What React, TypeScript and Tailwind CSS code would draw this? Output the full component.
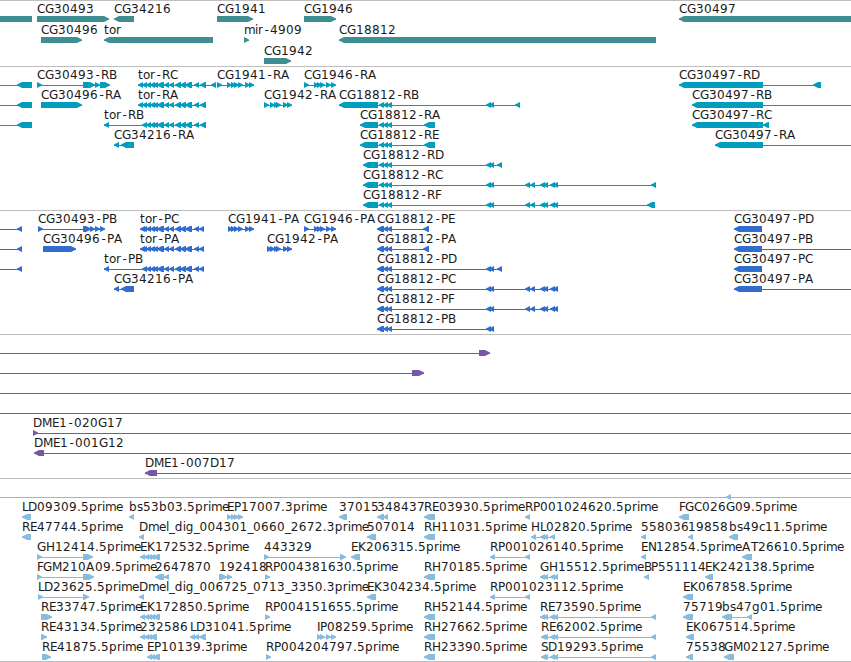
type Dir = "L" | "R" | "N";

interface Feature {
  row: number;
  dir: Dir;
  label?: string;
  exons: number[][];
  // span of the connecting line, when it goes beyond the exons
  from?: number;
  to?: number;
}

interface TrackProps {
  name: string;
  height: number;
  pitch: number;
  color: string;
  features: Feature[];
}

const WIDTH = 851;

const ADVANCE: Record<string, number> = {
  A: 9, B: 7, C: 8, D: 9, E: 7, F: 6, G: 9, H: 9, I: 3, K: 8, L: 6, M: 10, P: 7, R: 8, S: 7, T: 7,
  b: 8, c: 6, d: 8, e: 7, g: 8, i: 3, l: 3, m: 11, o: 7, p: 8, r: 5, s: 6, t: 5,
  "-": 7, ".": 4, _: 5.7,
};

function glyphPositions(text: string, start: number) {
  let x = start;
  return text
    .split("")
    .map((ch) => {
      const current = ch === "-" ? x + 1.5 : x;
      x += ADVANCE[ch] ?? 8;
      return current;
    })
    .join(" ");
}

function f(row: number, dir: Dir, label: string, exons: number[][], to?: number, from?: number): Feature {
  return { row, dir, label, exons, to, from };
}

function exonPoints([a, b]: number[], y: number, dir: Dir) {
  const tip = Math.min(5, b - a);
  if (dir === "L") {
    return `${a},${y + 2.5} ${a + tip},${y} ${b},${y} ${b},${y + 6} ${a + tip},${y + 6} ${a},${y + 3.5}`;
  }
  if (dir === "R") {
    return `${a},${y} ${b - tip},${y} ${b},${y + 2.5} ${b},${y + 3.5} ${b - tip},${y + 6} ${a},${y + 6}`;
  }
  return `${a},${y} ${b},${y} ${b},${y + 6} ${a},${y + 6}`;
}

const torTail = [[146, 151], [150, 155], [153, 158], [157, 164], [164, 169], [169, 174], [175, 181], [180, 186], [185, 192], [194, 199]];
const cg1941 = [[231, 236], [234, 239], [238, 243], [245, 250], [249, 254]];
const cg1946 = [[304, 309], [314, 319], [317, 322], [320, 325], [326, 331], [331, 336]];
const cg1942 = [[270, 275], [274, 279], [276, 281], [283, 288], [287, 292]];
const triple = [[379, 384], [383, 388], [387, 392]];
const tripleCds = [[377, 384], [383, 388], [387, 392]];
const pair = [[486, 491], [489, 494]];
const far = [[525, 530], [530, 535], [540, 545], [543, 548], [550, 555], [553, 558]];
const ek17 = [[140, 145], [144, 149], [147, 152], [150, 155], [153, 160]];
const estPairs = [[543, 548], [550, 555], [553, 558]];

const genes: Feature[] = [
  f(0, "N", "", [[0, 32]]),
  f(0, "R", "CG30493", [[37, 109]]),
  f(0, "L", "CG34216", [[114, 134]]),
  f(0, "R", "CG1941", [[217, 253]]),
  f(0, "R", "CG1946", [[304, 336]]),
  f(0, "L", "CG30497", [[679, 856]]),
  f(1, "R", "CG30496", [[41, 82]]),
  f(1, "L", "tor", [[104, 213]]),
  f(1, "R", "mir-4909", [[244, 249]]),
  f(1, "L", "CG18812", [[339, 656]]),
  f(2, "R", "CG1942", [[264, 291]]),
];

const transcripts: Feature[] = [
  f(0, "L", "", [[17, 32]], 32, 0),
  f(1, "L", "", [[17, 32]], 32, 0),
  f(2, "L", "", [[17, 32]], 32, 0),
  f(0, "R", "CG30493-RB", [[37, 42], [83, 95], [95, 100], [100, 110]]),
  f(0, "L", "tor-RC", [[138, 143], [142, 147], ...torTail, [200, 206], [211, 216]]),
  f(0, "R", "CG1941-RA", [[217, 222], [227, 232], ...cg1941]),
  f(0, "R", "CG1946-RA", cg1946),
  f(0, "L", "CG30497-RD", [[679, 763], [813, 821]]),
  f(1, "R", "CG30496-RA", [[41, 82]]),
  f(1, "L", "tor-RA", [[138, 143], [142, 147], ...torTail, [200, 206]]),
  f(1, "R", "CG1942-RA", [[264, 269], ...cg1942]),
  f(1, "L", "CG18812-RB", [[339, 378], ...triple, ...pair, [515, 520]]),
  f(1, "L", "CG30497-RB", [[692, 763]], 851),
  f(2, "L", "tor-RB", [[104, 109], [142, 147], ...torTail, [200, 206]]),
  f(2, "L", "CG18812-RA", [[360, 378], ...triple, [424, 435]]),
  f(2, "L", "CG30497-RC", [[692, 763], [763, 769]]),
  f(3, "L", "CG34216-RA", [[114, 119], [121, 134]]),
  f(3, "L", "CG18812-RE", [[360, 378], ...triple, [424, 435]]),
  f(3, "L", "CG30497-RA", [[715, 763]], 851),
  f(4, "L", "CG18812-RD", [[363, 378], ...triple, ...pair, [497, 502]]),
  f(5, "L", "CG18812-RC", [[363, 378], ...triple, ...pair, ...far, [651, 656]]),
  f(6, "L", "CG18812-RF", [[363, 378], ...triple, ...pair, ...far, [647, 655]]),
];

const proteins: Feature[] = [
  f(0, "L", "", [[17, 22]], 22, 0),
  f(1, "L", "", [[17, 22]], 22, 0),
  f(2, "L", "", [[17, 22]], 22, 0),
  f(0, "R", "CG30493-PB", [[38, 43], [83, 91], [90, 95], [95, 100], [100, 105]]),
  f(0, "L", "tor-PC", [[140, 145], [142, 147], ...torTail, [199, 204]]),
  f(0, "R", "CG1941-PA", [[228, 233], ...cg1941]),
  f(0, "R", "CG1946-PA", cg1946),
  f(0, "L", "CG18812-PE", [...tripleCds, [423, 429]]),
  f(0, "L", "CG30497-PD", [[734, 762]]),
  f(1, "R", "CG30496-PA", [[43, 76]]),
  f(1, "L", "tor-PA", [[140, 145], [142, 147], ...torTail, [199, 204]]),
  f(1, "R", "CG1942-PA", [[267, 272], ...cg1942]),
  f(1, "L", "CG18812-PA", [...tripleCds, [423, 429]]),
  f(1, "L", "CG30497-PB", [[734, 762]], 851),
  f(2, "L", "tor-PB", [[104, 109], [142, 147], ...torTail, [199, 204]]),
  f(2, "L", "CG18812-PD", [...tripleCds, ...pair, [497, 502]]),
  f(2, "L", "CG30497-PC", [[734, 762]]),
  f(3, "L", "CG34216-PA", [[114, 119], [121, 134]]),
  f(3, "L", "CG18812-PC", [...tripleCds, ...pair, ...far]),
  f(3, "L", "CG30497-PA", [[734, 762]], 851),
  f(4, "L", "CG18812-PF", [...tripleCds, ...pair, ...far]),
  f(5, "L", "CG18812-PB", [...tripleCds, ...pair]),
];

const clones: Feature[] = [
  f(0, "R", "", [[479, 490]], 490, 0),
  f(1, "R", "", [[412, 424]], 424, 0),
  f(2, "N", "", [], 851, 0),
  f(3, "N", "", [], 851, 0),
  f(4, "R", "DME1-020G17", [[33, 38]], 851),
  f(5, "L", "DME1-001G12", [[34, 44]], 851),
  f(6, "L", "DME1-007D17", [[145, 157]], 851),
];

const ests: Feature[] = [
  f(0, "L", "", [[726, 731]], 851, 0),
  f(1, "L", "LD09309.5prime", [[22, 31]]),
  f(1, "L", "bs53b03.5prime", [[129, 134]]),
  f(1, "R", "EP17007.3prime", [[227, 232], [231, 236], [234, 239], [238, 243]]),
  f(1, "L", "37015", [[339, 347]]),
  f(1, "L", "348437", [[377, 384], [383, 388]]),
  f(1, "L", "RE03930.5prime", [[424, 435]]),
  f(1, "L", "RP001024620.5prime", [[525, 530]]),
  f(1, "L", "FGC026G09.5prime", [[679, 689]]),
  f(2, "L", "RE47744.5prime", [[22, 31]]),
  f(2, "L", "Dmel_dig_004301_0660_2672.3prime", [[139, 144]]),
  f(2, "L", "507014", [[367, 376]]),
  f(2, "L", "RH11031.5prime", [[424, 435]]),
  f(2, "L", "HL02820.5prime", [[531, 536], [540, 545], [543, 548], [550, 555]]),
  f(2, "L", "558036", [[641, 646]]),
  f(2, "L", "19858", [[688, 693]]),
  f(2, "L", "bs49c11.5prime", [[729, 738]]),
  f(3, "R", "GH12414.5prime", [[37, 42], [83, 93]]),
  f(3, "L", "EK172532.5prime", ek17),
  f(3, "R", "443329", [[264, 269], [340, 346]]),
  f(3, "L", "EK206315.5prime", [[351, 360]]),
  f(3, "L", "RP001026140.5prime", [[490, 495], [525, 530]]),
  f(3, "L", "EN12854.5prime", [[641, 646]]),
  f(3, "L", "AT26610.5prime", [[742, 752]]),
  f(4, "R", "FGM210A09.5prime", [[37, 42], [83, 94]]),
  f(4, "L", "2647870", [[155, 164], [164, 169]]),
  f(4, "R", "192418", [[219, 227], [227, 232]]),
  f(4, "R", "RP004381630.5prime", [[265, 270]]),
  f(4, "L", "RH70185.5prime", [[424, 435]]),
  f(4, "L", "GH15512.5prime", [[540, 545], ...estPairs]),
  f(4, "L", "BP551114", [[644, 649]]),
  f(4, "L", "EK242138.5prime", [[705, 713]]),
  f(5, "R", "LD23625.5prime", [[38, 43], [83, 89]]),
  f(5, "L", "Dmel_dig_006725_0713_3350.3prime", [[139, 144]]),
  f(5, "L", "EK304234.5prime", [[367, 376]]),
  f(5, "L", "RP001023112.5prime", [[490, 495], [525, 530]]),
  f(5, "L", "EK067858.5prime", [[683, 693]]),
  f(6, "R", "RE33747.5prime", [[41, 52]]),
  f(6, "L", "EK172850.5prime", ek17),
  f(6, "R", "RP004151655.5prime", [[265, 270]]),
  f(6, "L", "RH52144.5prime", [[424, 435]]),
  f(6, "L", "RE73590.5prime", [[540, 545], ...estPairs, [651, 656]]),
  f(6, "L", "75719", [[683, 693]]),
  f(6, "L", "bs47g01.5prime", [[722, 732], [747, 752]]),
  f(7, "R", "RE43134.5prime", [[41, 47]]),
  f(7, "L", "232586", [[140, 145], [144, 149], [147, 152], [150, 157]]),
  f(7, "L", "LD31041.5prime", [[190, 195], [194, 199], [199, 206]]),
  f(7, "R", "IP08259.5prime", [[317, 322], [320, 325], [326, 331], [331, 336]]),
  f(7, "L", "RH27662.5prime", [[424, 435]]),
  f(7, "L", "RE62002.5prime", [[541, 546], ...estPairs, [651, 656]]),
  f(7, "L", "EK067514.5prime", [[686, 694]]),
  f(8, "R", "RE41875.5prime", [[42, 51]]),
  f(8, "L", "EP10139.3prime", [[147, 152], [150, 155], [153, 160]]),
  f(8, "R", "RP004204797.5prime", [[266, 271]]),
  f(8, "L", "RH23390.5prime", [[424, 435]]),
  f(8, "L", "SD19293.5prime", [[541, 546], ...estPairs, [651, 656]]),
  f(8, "L", "75538", [[686, 693]]),
  f(8, "L", "GM02127.5prime", [[724, 734]]),
];

const tracks: TrackProps[] = [
  { name: "Genes", height: 65, pitch: 21, color: "#3f8e93", features: genes },
  { name: "Transcripts", height: 143, pitch: 20, color: "#009dbf", features: transcripts },
  { name: "Proteins", height: 123, pitch: 20, color: "#306dce", features: proteins },
  { name: "BAC clones", height: 143, pitch: 20, color: "#7658a6", features: clones },
  { name: "ESTs", height: 182, pitch: 20, color: "#88bcde", features: ests },
];

function Track({ name, height, pitch, color, features }: TrackProps) {
  return (
    <section aria-label={name} className="border-t border-[#bebebe]">
      <svg width={WIDTH} height={height} className="block overflow-hidden">
        {features.map((feature, i) => {
          const baseline = 12 + feature.row * pitch;
          const { exons, dir, label } = feature;
          const start = feature.from ?? exons[0][0];
          const end = feature.to ?? exons[exons.length - 1][1];
          return (
            <g key={i}>
              <g fill={color}>
                <rect x={start} y={baseline + 6} width={end - start} height={1} />
                {exons.map((exon, j) => (
                  <polygon key={j} points={exonPoints(exon, baseline + 3, dir)} />
                ))}
              </g>
              {label && (
                <text x={glyphPositions(label, exons[0][0])} y={baseline} fill="#1a1a1a">
                  {label}
                </text>
              )}
            </g>
          );
        })}
      </svg>
    </section>
  );
}

export default function App() {
  return (
    <main className="w-[851px] overflow-hidden border-b border-[#bebebe] bg-white font-['DejaVu_Sans',sans-serif] text-[12px]">
      {tracks.map((track) => (
        <Track key={track.name} {...track} />
      ))}
    </main>
  );
}
